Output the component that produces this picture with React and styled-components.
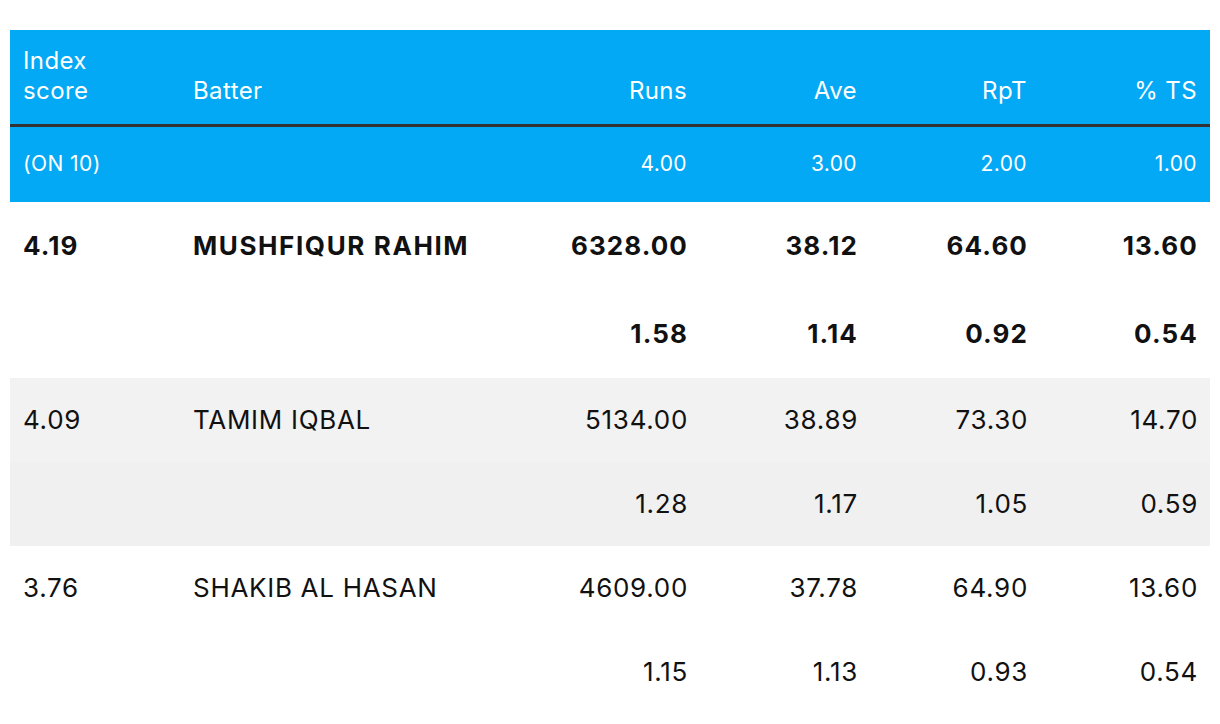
import styled, { createGlobalStyle } from 'styled-components';

const Global = createGlobalStyle`
body {
  margin: 0;
  background: #fff;
  font-family: Inter, "Liberation Sans", sans-serif;
}
`

const Page = styled.div`
padding: 30px 10px 10px;
`

const Table = styled.table`
width: 1200px;
border-collapse: collapse;
table-layout: fixed;
color: #111;
`

const HeadRow = styled.tr`
background: #03a9f4;
color: #fff;
height: ${(props) => props.h}px;
border-bottom: ${(props) => (props.line ? '3px solid #333' : 'none')};
`

const Th = styled.th`
font-weight: 400;
text-align: ${(props) => (props.right ? 'right' : 'left')};
vertical-align: ${(props) => (props.mid ? 'middle' : 'bottom')};
padding: 0 13px ${(props) => (props.mid ? '0' : '18px')};
line-height: 30px;
font-size: ${(props) => (props.small ? '21px' : '24px')};
letter-spacing: 0.4px;
`

const Row = styled.tr`
background: ${(props) => props.bg || '#fff'};
height: ${(props) => props.h}px;
font-size: 26px;
font-weight: ${(props) => (props.bold ? 700 : 400)};
letter-spacing: ${(props) => (props.bold ? '1.1px' : '0.7px')};
`

const Td = styled.td`
padding: 0 ${(props) => (props.right ? '12px' : '13px')} 2px 13px;
vertical-align: middle;
text-align: ${(props) => (props.right ? 'right' : 'left')};
white-space: nowrap;
`

const Name = styled(Td)`
letter-spacing: ${(props) => (props.bold ? '1.6px' : '0.7px')};
`

const weights = ['4.00', '3.00', '2.00', '1.00'];

const players = [
  { score: '4.19', name: 'MUSHFIQUR RAHIM', stats: ['6328.00', '38.12', '64.60', '13.60'], idx: ['1.58', '1.14', '0.92', '0.54'], bold: true },
  { score: '4.09', name: 'TAMIM IQBAL', stats: ['5134.00', '38.89', '73.30', '14.70'], idx: ['1.28', '1.17', '1.05', '0.59'], bg: ['#f2f2f2', '#f0f0f0'] },
  { score: '3.76', name: 'SHAKIB AL HASAN', stats: ['4609.00', '37.78', '64.90', '13.60'], idx: ['1.15', '1.13', '0.93', '0.54'] },
];

const App = () => {
  return (
    <Page>
      <Global />
      <Table>
        <colgroup>
          <col style={{ width: 170 }} />
          <col style={{ width: 350 }} />
          <col style={{ width: 170 }} />
          <col style={{ width: 170 }} />
          <col style={{ width: 170 }} />
          <col style={{ width: 170 }} />
        </colgroup>
        <thead>
          <HeadRow h={95} line>
            <Th>Index<br />score</Th>
            <Th>Batter</Th>
            <Th right>Runs</Th>
            <Th right>Ave</Th>
            <Th right>RpT</Th>
            <Th right>% TS</Th>
          </HeadRow>
          <HeadRow h={77}>
            <Th mid small>(ON 10)</Th>
            <Th mid small></Th>
            {weights.map((w) => (
              <Th mid small right key={w}>{w}</Th>
            ))}
          </HeadRow>
        </thead>
        <tbody>
          {players.map((p) => (
            <>
              <Row key={p.name} bold={p.bold} h={p.bold ? 88 : 84} bg={p.bg && p.bg[0]}>
                <Td>{p.score}</Td>
                <Name bold={p.bold}>{p.name}</Name>
                {p.stats.map((s, i) => (
                  <Td right key={i}>{s}</Td>
                ))}
              </Row>
              <Row key={p.name + '-i'} bold={p.bold} h={p.bold ? 88 : 84} bg={p.bg && p.bg[1]}>
                <Td></Td>
                <Td></Td>
                {p.idx.map((s, i) => (
                  <Td right key={i}>{s}</Td>
                ))}
              </Row>
            </>
          ))}
        </tbody>
      </Table>
    </Page>
  );
};

export default App;
